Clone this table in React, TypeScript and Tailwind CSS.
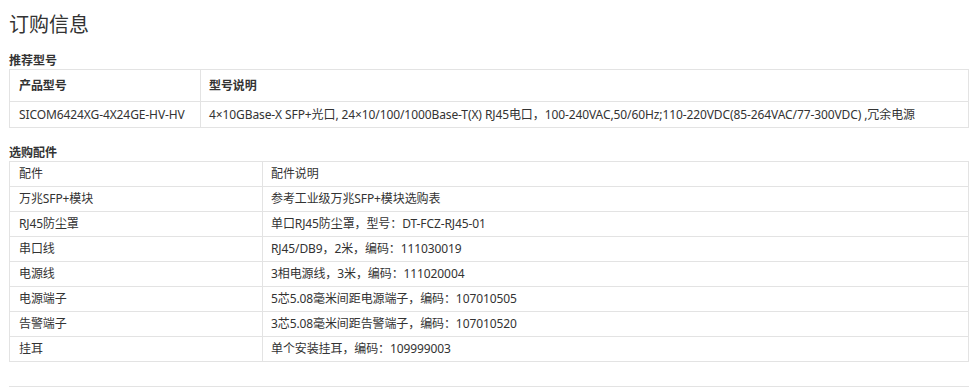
import React from 'react';

const models = [
  {
    name: 'SICOM6424XG-4X24GE-HV-HV',
    desc: '4×10GBase-X SFP+光口, 24×10/100/1000Base-T(X) RJ45电口，100-240VAC,50/60Hz;110-220VDC(85-264VAC/77-300VDC) ,冗余电源',
  },
];

const accessories = [
  { name: '万兆SFP+模块', desc: '参考工业级万兆SFP+模块选购表' },
  { name: 'RJ45防尘罩', desc: '单口RJ45防尘罩，型号：DT-FCZ-RJ45-01' },
  { name: '串口线', desc: 'RJ45/DB9，2米，编码：111030019' },
  { name: '电源线', desc: '3相电源线，3米，编码：111020004' },
  { name: '电源端子', desc: '5芯5.08毫米间距电源端子，编码：107010505' },
  { name: '告警端子', desc: '3芯5.08毫米间距告警端子，编码：107010520' },
  { name: '挂耳', desc: '单个安装挂耳，编码：109999003' },
];

export default function App() {
  return (
    <div
      className="bg-white text-[#333] pl-[9px] pr-[4px] w-[973px] h-[390px]"
      style={{ fontFamily: '"Noto Sans", "Noto Sans CJK SC", sans-serif' }}
    >
      <h2 className="pt-[11px] h-[38px] text-[20px] leading-[28px] font-normal text-[#333]">订购信息</h2>

      <div className="mt-[15px] h-[16px] text-[12px] leading-[16px] font-bold">推荐型号</div>
      <div className="border border-[#e3e3e3] text-[12px] tracking-[-0.1px]">
        <div className="flex h-[32px] border-b border-[#e3e3e3] font-bold">
          <div className="w-[191px] border-r border-[#e3e3e3] pl-[9px] flex items-center">产品型号</div>
          <div className="flex-1 pl-[8px] flex items-center">型号说明</div>
        </div>
        {models.map((m) => (
          <div key={m.name} className="flex h-[25px]">
            <div className="w-[191px] border-r border-[#e3e3e3] pl-[9px] flex items-center">{m.name}</div>
            <div className="flex-1 pl-[8px] flex items-center whitespace-nowrap">{m.desc}</div>
          </div>
        ))}
      </div>

      <div className="mt-[17px] h-[16px] text-[12px] leading-[16px] font-bold">选购配件</div>
      <div className="border-l border-r border-t border-[#e3e3e3] text-[12px] tracking-[-0.1px]">
        <div className="flex h-[25px] border-b border-[#e3e3e3]">
          <div className="w-[253px] border-r border-[#e3e3e3] pl-[9px] flex items-center">配件</div>
          <div className="flex-1 pl-[8px] flex items-center">配件说明</div>
        </div>
        {accessories.map((a) => (
          <div key={a.name} className="flex h-[25px] border-b border-[#e3e3e3]">
            <div className="w-[253px] border-r border-[#e3e3e3] pl-[9px] flex items-center">{a.name}</div>
            <div className="flex-1 pl-[8px] flex items-center">{a.desc}</div>
          </div>
        ))}
      </div>

      <div className="mt-[24px] border-t border-[#e3e3e3]" />
    </div>
  );
}
